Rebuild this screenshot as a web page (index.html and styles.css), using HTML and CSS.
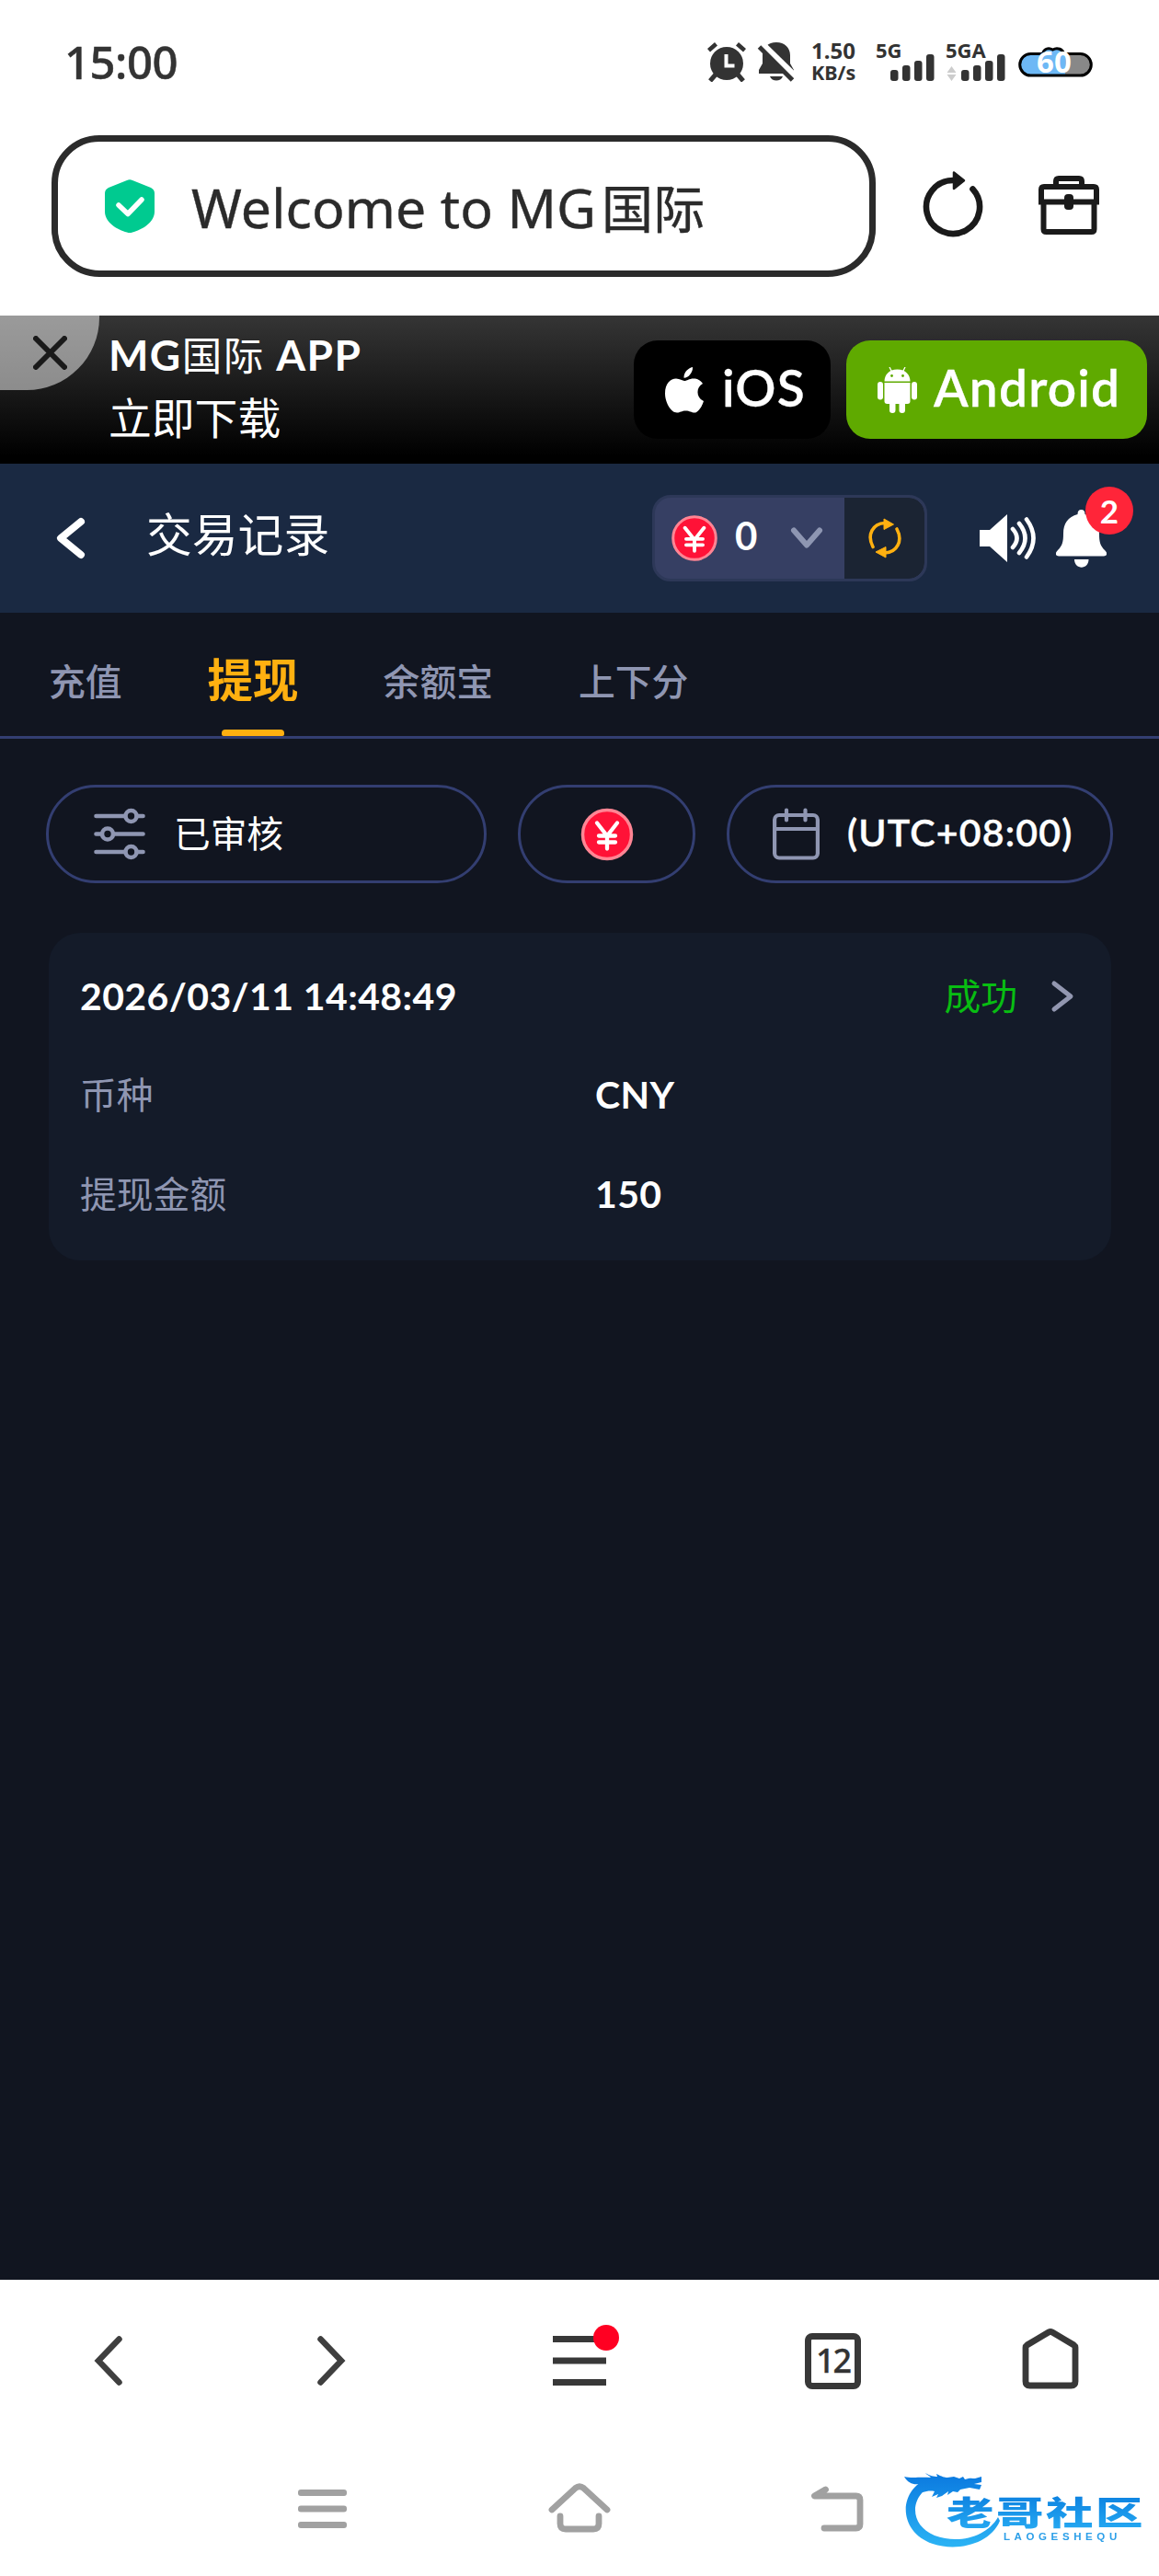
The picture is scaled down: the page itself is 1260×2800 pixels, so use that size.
FILE: index.html
```html
<!DOCTYPE html>
<html lang="zh-CN">
<head>
<meta charset="utf-8">
<title>Welcome to MG国际</title>
<link rel="stylesheet" href="styles.css">
</head>
<body>
<div class="phone">
  <div class="status">
    <span class="clock">15:00</span>
    <svg class="s-alarm" width="44" height="44" viewBox="768 45 44 44"><g fill="#333"><circle cx="790" cy="69" r="18"/><path d="M769 53l8-7 3 3.500-8 7zM811 53l-8-7-3 3.500 8 7z"/></g><path d="M778 81l-6 7M802 81l6 7" stroke="#333" stroke-width="5"/><path d="M789.500 59v12.500h9" fill="none" stroke="#fff" stroke-width="4"/></svg>
    <svg class="s-mute" width="42" height="44" viewBox="823 45 42 44"><path d="M844 46c9 0 15 6 15 14v9l4 7v4h-38v-4l4-7v-9c0-8 6-14 15-14z" fill="#333"/><path d="M837 83h14c-2 6-12 6-14 0z" fill="#333"/><path d="M827 47l38 37" stroke="#fff" stroke-width="8"/><path d="M825.500 51l36 36" stroke="#333" stroke-width="5"/></svg>
    <span class="speed"><b class="rate">1.50</b><b>KB/s</b></span>
    <span class="net"><b>5G</b><svg width="48" height="30" viewBox="969 59 48 30" fill="#333"><rect x="969" y="76" width="8.500" height="12" rx="3"/><rect x="982" y="71" width="8.500" height="17" rx="3"/><rect x="995" y="66" width="8.500" height="22" rx="3"/><rect x="1008" y="59" width="8.500" height="29" rx="3"/></svg></span>
    <span class="net net-a"><b>5GA</b><svg width="64" height="30" viewBox="1030 59 64 30" fill="#333"><path d="M1030.500 79l5-7 5 7zM1030.500 81l5 7 5-7z" fill="#ccc"/><rect x="1046" y="76" width="8.500" height="12" rx="3"/><rect x="1059" y="71" width="8.500" height="17" rx="3"/><rect x="1072" y="66" width="8.500" height="22" rx="3"/><rect x="1085" y="59" width="8.500" height="29" rx="3"/></svg></span>
    <svg class="s-batt" width="84" height="48" viewBox="1105 42 84 48"><defs><linearGradient id="bt"><stop offset=".64" stop-color="#6db8f5"/><stop offset=".64" stop-color="#888"/></linearGradient></defs><path d="M1119 57.500h12.500c1-5 6-7.500 11-4.500 5-3 11-.5 12 4.500h18a11.800 11.800 0 0 1 0 23.600h-54a11.800 11.800 0 0 1 0-23.600z" fill="url(#bt)" stroke="#000" stroke-width="3"/><text x="1144" y="78" text-anchor="middle" class="batt-num">60</text></svg>
  </div>

  <div class="address-row">
    <div class="address">
      <svg width="54" height="58" viewBox="114 195 54 58"><path d="M138 196q3-1.500 6 0l20 8q4 2 4 6v20c0 12-14 20-24 22.500q-3 1-6 0c-10-2.500-24-10.500-24-22.500v-20q0-4 4-6z" fill="#00ca90"/><path d="M129 223l10 9.500 15-15.500" fill="none" stroke="#fff" stroke-width="5.500" stroke-linecap="round" stroke-linejoin="round"/></svg>
      <span class="address-text">Welcome to MG<span class="address-cjk">国际</span></span>
    </div>
    <svg class="reload" width="68" height="76" viewBox="1002 184 68 76"><path d="M1036 196a29 29 0 1 0 21.500 9.500" fill="none" stroke="#1a1a1a" stroke-width="6.600" stroke-linecap="round"/><path d="M1037 187.500l11 8.700-11 8.700z" fill="#1a1a1a" stroke="#1a1a1a" stroke-width="2.500" stroke-linejoin="round"/></svg>
    <svg class="case" width="68" height="68" viewBox="1128 189 68 68"><g fill="none" stroke="#1a1a1a" stroke-width="6"><path d="M1148 202v-5q0-3 3-3h22q3 0 3 3v5"/><path d="M1132 222v-16q0-3 3-3h54q3 0 3 3v16M1129 219.500h66"/><path d="M1134.500 221v28q0 3 3 3h49q3 0 3-3v-28"/></g><rect x="1157" y="211" width="10" height="17" rx="4" fill="#1a1a1a"/></svg>
  </div>

  <div class="promo">
    <div class="close"><svg width="37" height="37" viewBox="0 0 37 37"><path d="M3 3l31 31M34 3L3 34" stroke="#1a1a1a" stroke-width="6" stroke-linecap="round"/></svg></div>
    <div class="promo-text"><div class="promo-title">MG<span>国际</span> APP</div><div class="promo-sub">立即下载</div></div>
    <div class="store ios"><svg width="42" height="50" viewBox="0 0 42 50" fill="#fff"><path d="M30 0c.5 6-5 12-9.500 11.800C20 6 25 1 30 0z"/><path d="M21 15c3 0 5-2.500 10-2.500 4 0 8 2 10 5.500-8 4.500-7 15.500 1 19-2 6-6 12.500-10 12.500-3.500 0-5-2-9.500-2s-6 2-9.500 2C6 49.500 0 38 0 28.500 0 18 6 12.500 12 12.500c4 0 7 2.500 9 2.500z"/></svg><span>iOS</span></div>
    <div class="store android"><svg width="43" height="50" viewBox="0 0 43 50" fill="#fff"><path d="M7.500 15.500c0-7 5-13 14-13s14 6 14 13z"/><path d="M13 0l3 6M30 0l-3 6" stroke="#fff" stroke-width="1.300"/><path d="M7.500 17h28v20q0 3-3 3h-22q-3 0-3-3z"/><rect x="0" y="16" width="6" height="19.500" rx="3"/><rect x="37" y="16" width="6" height="19.500" rx="3"/><rect x="13" y="34" width="6.500" height="16" rx="3.200"/><rect x="23.500" y="34" width="6.500" height="16" rx="3.200"/><circle cx="15.500" cy="9.500" r="1.400" fill="#5faa00"/><circle cx="27.500" cy="9.500" r="1.400" fill="#5faa00"/></svg><span>Android</span></div>
  </div>

  <div class="header">
    <svg class="back" width="32" height="46" viewBox="0 0 32 46"><path d="M27 5L5 23l22 18" fill="none" stroke="#fff" stroke-width="8" stroke-linecap="round" stroke-linejoin="round"/></svg>
    <h1 class="title">交易记录</h1>
    <div class="balance">
      <div class="amount">
        <svg width="50" height="50" viewBox="0 0 58 58"><circle cx="29" cy="29" r="27" fill="#ff1237" stroke="#ff8594" stroke-width="3.500"/><path d="M17 16l12 15 12-15M29 31v14M18.500 30h21M18.500 37.500h21" fill="none" stroke="#fff" stroke-width="4.500" stroke-linecap="round"/></svg>
        <span>0</span>
        <svg class="drop" width="36" height="24" viewBox="0 0 36 24"><path d="M4 3.500l14 16 14-16" fill="none" stroke="#8e96b2" stroke-width="6" stroke-linecap="round" stroke-linejoin="round"/></svg>
      </div>
      <div class="refresh"><svg width="38" height="44" viewBox="0 0 38 44"><path d="M6 31.500C-1 18 6 6 19 5.500M32 12C39 25 32 37.500 19 38" fill="none" stroke="#ffb010" stroke-width="3.600" stroke-linecap="round"/><path d="M18 1l10.500 6L18 12.500zM20 43L9 37l11-5.500z" fill="#ffb010" stroke="#ffb010" stroke-linejoin="round"/></svg></div>
    </div>
    <svg class="sound" width="62" height="54" viewBox="0 0 62 54"><path d="M0 18h11L30 1v52L11 36H0z" fill="#fff"/><g fill="none" stroke="#fff" stroke-width="4.600" stroke-linecap="round"><path d="M36 17q9 10 0 20M43 11q13 16 0 32M51 6.500q15 20.500 0 41"/></g></svg>
    <div class="bell"><svg width="55" height="63" viewBox="0 0 55 63" fill="#fff"><path d="M27.500 0q4 0 4 5C42 8 47 15 47 26c0 9 1 13 6 18 4 4 2 6.500-1 6.500H3C0 50.500-2 48 2 44c5-5 6-9 6-18C8 15 13 8 23.500 5q0-5 4-5z"/><path d="M20 54h15.500c0 11.500-15.500 11.500-15.500 0z"/></svg><span class="badge">2</span></div>
  </div>

  <div class="tabs">
    <span class="tab">充值</span>
    <span class="tab active">提现</span>
    <span class="tab">余额宝</span>
    <span class="tab">上下分</span>
  </div>

  <div class="content">
    <div class="filters">
      <div class="pill state"><svg width="56" height="57" viewBox="0 0 56 57" fill="none" stroke="#8f96b2" stroke-width="4.600" stroke-linecap="round"><path d="M2.500 9H33M47 9h6.500M2.500 28.500H8M22 28.500h31.500M2.500 48H33M47 48h6.500"/><circle cx="40.500" cy="9" r="6"/><circle cx="15" cy="28.500" r="6"/><circle cx="40.500" cy="48" r="6"/></svg><span>已审核</span></div>
      <div class="pill coin"><svg width="58" height="58" viewBox="0 0 58 58"><circle cx="29" cy="29" r="26.500" fill="#ff1237" stroke="#ff8594" stroke-width="3.500"/><path d="M18 16.500l11 14 11-14M29 31v13.500M20 30.500h18M20 37.500h18" fill="none" stroke="#fff" stroke-width="4.300" stroke-linecap="round"/></svg></div>
      <div class="pill zone"><svg width="51" height="57" viewBox="0 0 51 57" fill="none" stroke="#8f96b2" stroke-width="4.200" stroke-linecap="round"><rect x="2.100" y="8" width="46.800" height="46.500" rx="5"/><path d="M2.500 23h46M15 2.500v11M35.500 2.500v11"/></svg><span>(UTC+08:00)</span></div>
    </div>
    <div class="card">
      <div class="row head"><span class="date">2026/03/11 14:48:49</span><span class="ok">成功</span><svg width="26" height="36" viewBox="0 0 26 36"><path d="M4 4l18 14L4 32" fill="none" stroke="#9297b0" stroke-width="5" stroke-linecap="round" stroke-linejoin="round"/></svg></div>
      <div class="row"><span class="key">币种</span><span class="val">CNY</span></div>
      <div class="row"><span class="key">提现金额</span><span class="val">150</span></div>
    </div>
  </div>

  <div class="toolbar">
    <svg class="t-back" width="32" height="54" viewBox="0 0 32 54"><path d="M27.500 3.500L5 27l22.500 23.500" fill="none" stroke="#3f3f3f" stroke-width="6.500" stroke-linecap="round"/></svg>
    <svg class="t-fwd" width="32" height="54" viewBox="0 0 32 54"><path d="M4.500 3.500L27 27 4.500 50.500" fill="none" stroke="#3f3f3f" stroke-width="6.500" stroke-linecap="round"/></svg>
    <span class="t-menu"><svg width="58" height="54" viewBox="0 0 58 54"><path d="M0 3.500h58M0 27h58M0 50.500h58" stroke="#383838" stroke-width="7"/></svg><i class="dot"></i></span>
    <span class="t-tabs">12</span>
    <svg class="t-home" width="62" height="66" viewBox="0 0 62 66"><path d="M4 20.500v37q0 4.500 4.500 4.500h45q4.500 0 4.500-4.500v-37Q58 19 56.500 18L33 4q-2-1-4 0L5.500 18Q4 19 4 20.500z" fill="none" stroke="#383838" stroke-width="6.800"/></svg>
  </div>

  <div class="navbar">
    <svg class="n-menu" width="53" height="42" viewBox="0 0 53 42" fill="#a1a1a1"><rect width="53" height="7" rx="3"/><rect y="17.500" width="53" height="7" rx="3"/><rect y="35" width="53" height="7" rx="3"/></svg>
    <svg class="n-home" width="68" height="54" viewBox="596 2698 68 54"><path d="M600 2727l25.500-23.500q4.500-3.500 9 0l25.500 23.500M609 2734v8q0 6 6 6h30q6 0 6-6v-8" fill="none" stroke="#a1a1a1" stroke-width="6.800" stroke-linecap="round"/></svg>
    <svg class="n-back" width="58" height="50" viewBox="881 2702 58 50"><path d="M897.500 2706l-12 7h45q4.500 0 4.500 4.500v26q0 4.500-4.500 4.500h-34.500" fill="none" stroke="#a1a1a1" stroke-width="6.800" stroke-linecap="round" stroke-linejoin="round"/></svg>
    <svg class="brand" width="270" height="104" viewBox="979 2677 270 104"><defs><linearGradient id="bl" x1="0" y1="2690" x2="0" y2="2770" gradientUnits="userSpaceOnUse"><stop offset="0" stop-color="#0b7ae0"/><stop offset="1" stop-color="#2cb5f5"/></linearGradient><linearGradient id="bg" x1="0" y1="0" x2="0" y2="1"><stop offset="0" stop-color="#0878dc"/><stop offset="1" stop-color="#28aef4"/></linearGradient></defs><path d="M1020 2698c-35 9-37 46-7 58 27 10 57 1 69-20l2 4c-10 25-46 34-73 25-40-14-38-62 0-73z" fill="url(#bl)"/><path d="M980 2692c9 2 16 0 29 1-1-2-5-3-6-5 5 3 9 4 13 4l-1-3c6 3 9 4 12 4l7-1 6 2 4-2 2 3c6-2 8-1 11-1l7-2v6l-8 2 8 1-2 5-11-2-10 2-3 3-5-1-6 4 1-4-7 5-6 2 2-4-7 3 3-6c-5-1-9 0-13 1l-4-9c-6 1-12-1-16-8z" fill="url(#bl)"/><text class="brand-cn" transform="translate(1026 2744.500) scale(1.430 1)" fill="url(#bg)">老哥社区</text><text class="brand-en" x="1088" y="2760.500">LAOGESHEQU</text></svg>
  </div>
</div>
</body>
</html>
```
FILE: styles.css
```css
* { box-sizing: border-box; }
body { margin: 0; background: #fff; font-family: Lato, "Noto Sans CJK SC", sans-serif; }
svg { display: block; flex: none; }
.phone { width: 1260px; height: 2800px; display: flex; flex-direction: column; overflow: hidden; white-space: nowrap; }

/* system status bar */
.status { height: 134px; display: flex; align-items: center; padding-left: 70px; color: #333; font-family: "Noto Sans", sans-serif; }
.clock { width: 698px; font-size: 49px; font-weight: 500; line-height: 60px; letter-spacing: -0.5px; -webkit-text-stroke: .5px #333; }
.s-mute { margin-left: 11px; }
.speed { width: 70px; margin-left: 17px; display: flex; flex-direction: column; font-size: 21.500px; line-height: 24px; }
.rate { font-size: 24px; line-height: 24px; }
.net { height: 42px; width: 76px; display: flex; flex-direction: column; justify-content: space-between; font-size: 22px; }
.net b { line-height: 14px; padding-top: 1px; }
.net svg { margin-left: 16px; margin-top: -2px; }
.net-a svg { margin-left: 1px; }
.s-batt { margin-left: 3px; }
.batt-num { font: 700 33px "Noto Sans", sans-serif; fill: #fff; }

/* browser address row */
.address-row { height: 209px; display: flex; padding: 13px 0 0 56px; }
.address { width: 896px; height: 154px; border: 7px solid #2b2b2b; border-radius: 52px; display: flex; align-items: center; padding-left: 51px; }
.address-text { margin-left: 40px; color: #2b2b2b; font: 59px/80px "Noto Sans", "Noto Sans CJK SC", sans-serif; padding-top: 1px; letter-spacing: .1px; -webkit-text-stroke: .4px #2b2b2b; }
.address-cjk { font-family: "Noto Sans CJK SC", sans-serif; font-size: 56px; margin-left: 6px; line-height: 1; }
.reload { margin: 37px 0 0 50px; }
.case { margin: 42px 0 0 58px; }

/* app download banner */
.promo { height: 161px; display: flex; background: linear-gradient(#353535, #000 95%); color: #fff; }
.close { width: 108px; height: 81px; flex: none; background: rgba(255, 255, 255, .5); border-bottom-right-radius: 79px; padding: 22px 0 0 36px; }
.promo-text { width: 571px; margin-left: 10px; padding-top: 10px; }
.promo-title { font-size: 46px; font-weight: 700; line-height: 66px; letter-spacing: 1.400px; }
.promo-title span { font-weight: 400; font-size: 43.500px; line-height: 1; letter-spacing: 1.500px; }
.promo-sub { font-size: 46.800px; line-height: 71px; }
.store { height: 107px; margin-top: 27px; border-radius: 26px; display: flex; align-items: center; font-size: 55px; font-weight: 600; line-height: 60px; }
.store svg { margin-top: 1px; }
.store span { margin: -6px 0 0 20px; letter-spacing: 1.200px; -webkit-text-stroke: .3px #fff; }
.ios { width: 214px; background: #000; padding-left: 34px; }
.android { width: 327px; background: #5faa00; padding-left: 34px; margin-left: 17px; }
.android span { margin-left: 18px; }

/* page header */
.header { height: 162px; background: #1a2942; display: flex; align-items: center; color: #fff; }
.back { margin-left: 61px; }
.title { width: 550px; margin: -8px 0 0 66px; font-size: 49.800px; font-weight: 400; line-height: 60px; }
.balance { width: 299px; height: 94px; border: 3px solid #2d3858; border-radius: 20px; background: #363f63; display: flex; overflow: hidden; }
.amount { width: 206px; display: flex; align-items: center; padding-left: 18px; font-size: 42px; font-weight: 700; }
.amount span { width: 25px; margin: -6px 0 0 19px; }
.drop { margin-left: 35px; }
.refresh { flex: 1; background: #1b2433; display: flex; align-items: center; justify-content: center; border-radius: 0 17px 17px 0; }
.sound { margin-left: 57px; }
.bell { position: relative; margin-left: 21px; }
.badge { position: absolute; left: 32px; top: -25px; width: 52px; height: 52px; border-radius: 50%; background: #ff2539; font-size: 35px; font-weight: 700; line-height: 52px; text-align: center; }

/* transaction tabs */
.tabs { height: 137px; background: #111520; border-bottom: 3px solid #333e71; display: flex; align-items: center; padding-left: 53px; color: #8f96b2; }
.tab { font-size: 39.800px; font-weight: 500; line-height: 60px; margin-right: 93px; height: 134px; padding-top: 45px; }
.tab.active { color: #ffb010; font-size: 49.500px; font-weight: 700; padding-top: 43px; position: relative; margin-right: 92px; }
.tab.active::after { content: ""; position: absolute; left: 50%; bottom: 0; width: 68px; height: 7px; margin-left: -34px; border-radius: 4px 4px 2px 2px; background: #ffb010; }

/* filters and records */
.content { height: 1675px; background: #111520; padding: 50px 50px 0; }
.filters { display: flex; gap: 34px; }
.pill { height: 107px; border: 3px solid #333e71; border-radius: 54px; display: flex; align-items: center; color: #fff; font-size: 39.700px; }
.state { width: 479px; padding-left: 49px; }
.state span { margin: -6px 0 0 31px; }
.coin { width: 193px; justify-content: center; }
.zone { width: 420px; padding-left: 47px; font-size: 41px; font-weight: 600; }
.zone span { margin: -5px 0 0 30px; letter-spacing: 1.200px; -webkit-text-stroke: .4px #fff; }
.card { width: 1155px; height: 356px; margin: 54px 0 0 3px; padding: 15px 40px 0 34px; border-radius: 34px; background: #141b29; }
.row { height: 107.500px; display: flex; align-items: center; font-size: 39.800px; line-height: 60px; }
.date { flex: 1; color: #fff; font-size: 41px; font-weight: 700; letter-spacing: .4px; }
.ok { color: #08bd12; margin-right: 36px; }
.key { width: 560px; color: #8f96b2; }
.val { color: #fff; font-size: 41px; font-weight: 700; letter-spacing: .4px; }

/* browser toolbar */
.toolbar { height: 176px; display: flex; align-items: center; }
.t-back { margin-left: 102px; }
.t-fwd { margin-left: 210px; }
.t-menu { position: relative; margin-left: 225px; }
.dot { position: absolute; right: -14px; top: -12px; width: 28px; height: 28px; border-radius: 50%; background: #ff0022; }
.t-tabs { width: 61px; height: 61px; margin-left: 216px; border: 7px solid #383838; border-radius: 8px; color: #333; font: 500 36px/45px "Noto Sans", sans-serif; letter-spacing: -2px; -webkit-text-stroke: .3px #333; text-align: center; }
.t-home { margin: -4px 0 0 175px; }

/* system navigation */
.navbar { height: 146px; display: flex; align-items: center; }
.n-menu { margin-left: 324px; }
.n-home { margin: -2px 0 0 219px; }
.n-back { margin-left: 217px; }
.brand { margin: 4px 0 0 43px; filter: blur(.7px); }
.brand-cn { font: 900 36px "Noto Sans CJK SC", sans-serif; letter-spacing: 1.800px; }
.brand-en { font: 700 11.500px "Liberation Sans", sans-serif; fill: #2c9fe8; letter-spacing: 4.600px; }
```
